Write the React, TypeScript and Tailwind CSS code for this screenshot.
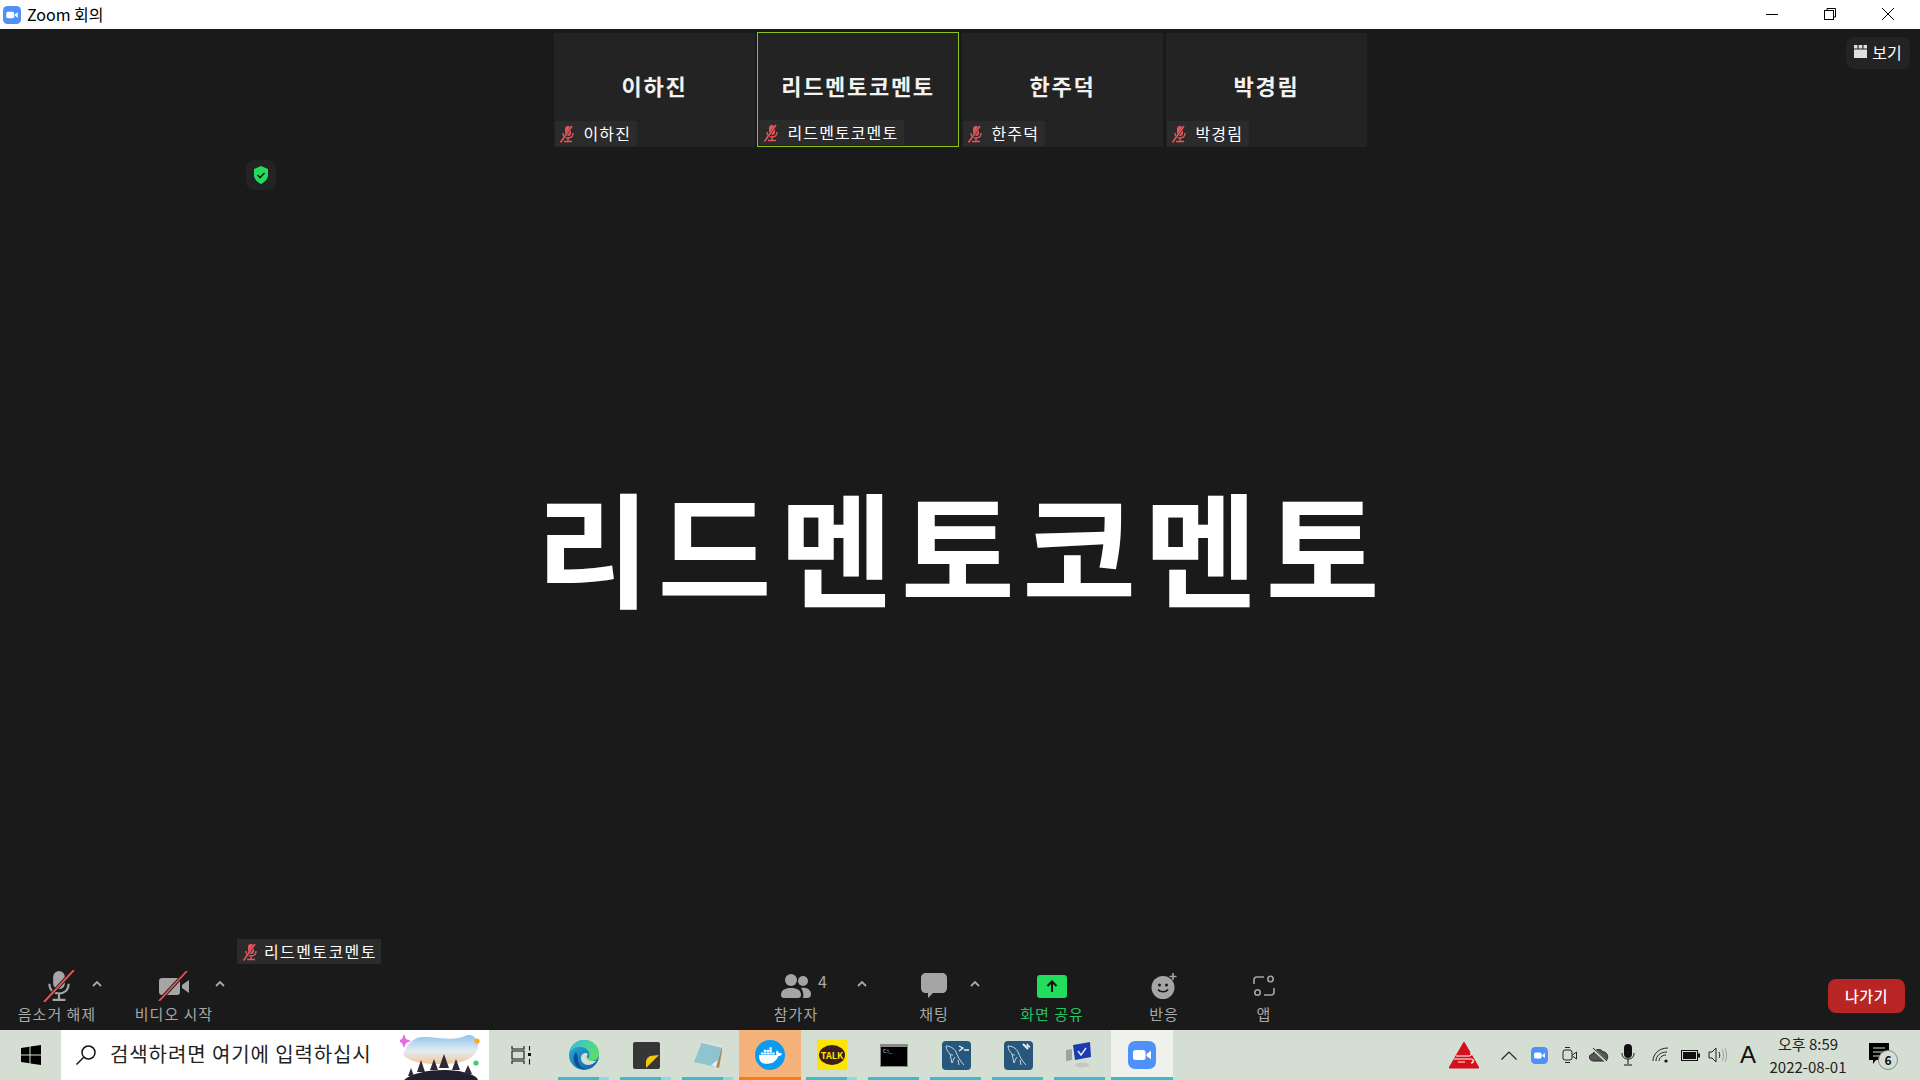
import { SiDocker } from 'react-icons/si';

const FONT = '[font-family:"Noto_Sans_CJK_KR","Noto_Sans",sans-serif]';

function ZoomGlyph({ size }: { size: number }) {
  return (
    <svg width={size} height={size} viewBox="0 0 28 28">
      <rect width="28" height="28" rx="7" fill="#4f90fb" />
      <rect x="5" y="9" width="12.5" height="10" rx="2.5" fill="#fff" />
      <path d="M18.5 13l4.5-3.2v8.4L18.5 15z" fill="#fff" />
    </svg>
  );
}

function MutedMicSmall() {
  return (
    <svg width="16" height="18" viewBox="0 0 16 18" className="shrink-0">
      <rect x="6" y="1" width="6" height="10" rx="3" fill="#e5555a" />
      <path d="M4 8c0 3 2 5 5 5s5-2 5-5M9 13v3M5 16.5h8" stroke="#e5555a" strokeWidth="1.4" fill="none" />
      <path d="M13.5 0.5L2 17.5" stroke="#2b2b2b" strokeWidth="2.4" />
      <path d="M13 1L1.5 17.5" stroke="#e5555a" strokeWidth="1.6" />
    </svg>
  );
}

function NameTag({ name }: { name: string }) {
  return (
    <div className="flex h-[25px] items-center gap-[9px] bg-[#2b2b2b] pl-[4px] pr-[6px]">
      <MutedMicSmall />
      <span className="pb-[1px] text-[16px] leading-none tracking-[1.1px] text-white">{name}</span>
    </div>
  );
}

function Thumb({ name, active }: { name: string; active?: boolean }) {
  return (
    <div className={`flex flex-col justify-between bg-[#232323] ${active ? '-mt-[1px] -ml-[1px] h-[115px] w-[202px] border border-[#8cc21e]' : 'h-[114px] w-[201px]'}`}>
      <div className="pt-[36px] pl-[1px] text-center text-[22px] leading-[32px] font-bold tracking-[1.7px] text-[#f2f2f2]">{name}</div>
      <div className="flex pb-[1px] pl-[1px]"><NameTag name={name} /></div>
    </div>
  );
}

function Caret() {
  return (
    <svg width="16" height="10" viewBox="0 0 16 10">
      <path d="M4 7l4-4 4 4" stroke="#a8a8a8" strokeWidth="1.8" fill="none" />
    </svg>
  );
}

function ToolItem({ width, label, green, children }: { width: string; label: string; green?: boolean; children: React.ReactNode }) {
  return (
    <div className={`flex flex-col items-center ${width}`}>
      <div className="flex h-[34px] items-center justify-center">{children}</div>
      <div className={`mt-[1px] text-[15px] leading-[20px] tracking-[1px] whitespace-nowrap ${green ? 'text-[#22c55e]' : 'text-[#a9a9a9]'}`}>{label}</div>
    </div>
  );
}

function TaskItem({ children, bar = 'none', bg = '' }: { children?: React.ReactNode; bar?: 'none' | 'open' | 'two' | 'orange' | 'full'; bg?: string }) {
  return (
    <div className={`relative flex h-full w-[62px] shrink-0 items-center justify-center ${bg}`}>
      {children}
      {bar === 'open' && <div className="absolute bottom-0 left-[5px] h-[3px] w-[51px] bg-[#35bfcc]" />}
      {bar === 'two' && (
        <div className="absolute bottom-0 left-[5px] flex h-[3px] w-[51px]">
          <div className="w-[41px] bg-[#35bfcc]" />
          <div className="w-[10px] bg-[#8adbe2]" />
        </div>
      )}
      {bar === 'orange' && <div className="absolute bottom-0 left-0 h-[3px] w-full bg-[#fb7c12]" />}
      {bar === 'full' && <div className="absolute bottom-0 left-0 h-[3px] w-full bg-[#35bfcc]" />}
    </div>
  );
}

function SearchArt() {
  return (
    <svg width="82" height="50" viewBox="0 0 82 50">
      <defs>
        <linearGradient id="cloud" x1="0" y1="0" x2="0" y2="1">
          <stop offset="0" stopColor="#8fc4ec" />
          <stop offset="0.55" stopColor="#e3ebf2" />
          <stop offset="1" stopColor="#f0c99a" />
        </linearGradient>
      </defs>
      <path d="M3 24C8 14 12 8 22 7c14-1 30 5 43-1 6-3 12 1 13 8 1 9-8 17-22 19-18 2-47 2-53-9z" fill="url(#cloud)" />
      <path d="M4 4l2 5 5 2-5 2-2 5-2-5-4-2 4-2z" fill="#e66ae6" />
      <circle cx="77" cy="11" r="2.6" fill="#f9a91a" />
      <circle cx="76" cy="33" r="2.6" fill="#3ccf6a" />
      <path d="M4 50c8-7 24-10 40-10s32 4 34 10z" fill="#20202e" />
      <path d="M17 42l4-12 4 12zM30 40l4-11 4 11zM39 38l5-14 5 14zM52 40l4-11 4 11zM64 44l4-9 4 9zM8 46l3-8 3 8z" fill="#2e2a38" />
    </svg>
  );
}

function EdgeIcon() {
  return (
    <svg width="32" height="32" viewBox="0 0 32 32">
      <defs>
        <linearGradient id="edgeA" x1="0" y1="0" x2="1" y2="1">
          <stop offset="0" stopColor="#2bb3d9" />
          <stop offset="1" stopColor="#0c5aa8" />
        </linearGradient>
        <linearGradient id="edgeB" x1="0" y1="0" x2="1" y2="0.6">
          <stop offset="0" stopColor="#35c1e0" />
          <stop offset="1" stopColor="#5cdc6a" />
        </linearGradient>
      </defs>
      <circle cx="16" cy="16" r="15" fill="url(#edgeA)" />
      <path d="M2 13C4 5 10 1 16 1c9 0 15 6 15 14 0 5-4 7-8 7-3 0-5-1-5-2 3-1 4-3 3-6-1-4-5-6-9-6-5 0-8 2-10 5z" fill="url(#edgeB)" />
      <path d="M13 19c0-3 2-5 5-5 2 0 2 2 1 3-1 3 2 5 6 5 1 0 3 0 4-1-2 3-6 5-9 5-4 0-7-3-7-7z" fill="#d5ded3" />
      <path d="M10 20c0 5 3 9 8 10-5 1-11-2-12-8-1-4 0-7 2-9 1 2 2 4 2 7z" fill="#0f4f95" />
    </svg>
  );
}

function MysqlTile({ wrench }: { wrench?: boolean }) {
  return (
    <svg width="29" height="29" viewBox="0 0 29 29">
      <rect width="29" height="29" rx="4" fill="#27577d" />
      <path d="M4 5c4 0 8 2 10 6 2 5 4 9 8 13M4 5c0 3 2 6 4 8 1 3 1 6 2 9M8 13c1 1 2 1 3 1M10 22c1-2 1-3 3-6M16 19l1 5" stroke="#d8e4ec" strokeWidth="0.9" fill="none" />
      {wrench ? (
        <path d="M19 3l5 5M23 3l1 2 2 1" stroke="#eef4f8" strokeWidth="1.8" fill="none" />
      ) : (
        <path d="M17 5l4 2-4 3M22 9h5" stroke="#eef4f8" strokeWidth="1.3" fill="none" />
      )}
    </svg>
  );
}

function Wifi() {
  return (
    <svg width="18" height="18" viewBox="0 0 18 18" fill="none" stroke="#222" strokeWidth="1">
      <path d="M1 15C1 8 7 2 16 2M4 15c0-5 4-9 11-9M7 15c0-3 3-6 7-6" />
      <circle cx="14" cy="15" r="1.6" fill="#111" stroke="none" />
    </svg>
  );
}

export default function App() {
  return (
    <div className={`flex h-[1080px] w-[1920px] flex-col overflow-hidden bg-[#1a1a1a] ${FONT}`}>
      {/* title bar */}
      <div className="flex h-[29px] shrink-0 items-center bg-white pl-[3px] text-black">
        <ZoomGlyph size={18} />
        <span className="ml-[6px] pb-[1px] text-[16px] leading-none">Zoom 회의</span>
        <div className="ml-auto flex h-full items-center pb-[1px]">
          <div className="flex w-[58px] justify-center"><div className="h-px w-[12px] bg-black" /></div>
          <div className="flex w-[58px] justify-center">
            <svg width="12" height="12" viewBox="0 0 12 12" fill="none" stroke="#000"><path d="M3 2.5V.5h8.5V9H9.5" /><rect x=".5" y="2.5" width="9" height="9" /></svg>
          </div>
          <div className="flex w-[58px] justify-center pr-[1px]">
            <svg width="12" height="12" viewBox="0 0 12 12" stroke="#000"><path d="M0 0l12 12M12 0L0 12" /></svg>
          </div>
          <div className="w-[3px]" />
        </div>
      </div>

      {/* video area */}
      <div className="relative flex min-h-0 flex-1 flex-col">
        <div className="flex h-[118px] shrink-0 justify-center gap-[3px] pt-[4px]">
          <Thumb name="이하진" />
          <Thumb name="리드멘토코멘토" active />
          <Thumb name="한주덕" />
          <Thumb name="박경림" />
        </div>
        <div className="flex flex-1 items-center justify-center pb-[20px] pl-[3px]">
          <span className="text-[124px] leading-none font-bold tracking-[7.500px] whitespace-nowrap text-white">리드멘토코멘토</span>
        </div>
        <div className="absolute top-[8px] right-[10px] flex h-[32px] w-[64px] items-center justify-center gap-[5px] rounded-lg bg-[#232323] pb-[3px] text-[16px] text-white">
          <svg width="13" height="13" viewBox="0 0 13 13" fill="#e0e0e0"><path d="M0 0h3.5v3.5H0zM4.7 0h3.6v3.5H4.7zM9.5 0H13v3.5H9.5zM0 4.5h13V13H0z" /></svg>
          보기
        </div>
        <div className="absolute top-[131px] left-[246px] flex h-[30px] w-[30px] items-center justify-center rounded-lg bg-[#232323]">
          <svg width="14" height="18" viewBox="0 0 14 18">
            <path d="M7 0l7 3v6c0 4-3 7-7 9-4-2-7-5-7-9V3z" fill="#22dd5c" />
            <path d="M3.5 9l2.5 2.5 4.500-4.500" stroke="#1a1a1a" strokeWidth="1.6" fill="none" />
          </svg>
        </div>
        <div className="absolute bottom-[-4px] left-[237px]">
          <div className="flex h-[25px] w-[144px] items-center gap-[6px] bg-[#2b2b2b] pl-[5px] text-[16px] tracking-[1.400px] text-white">
            <MutedMicSmall />
            <span className="pb-[1px] leading-none">리드멘토코멘토</span>
          </div>
        </div>
      </div>

      {/* meeting controls */}
      <div className="flex h-[70px] shrink-0 items-start pt-[9px] pl-[17px]">
        <ToolItem width="w-[80px]" label="음소거 해제">
          <svg width="32" height="32" viewBox="0 0 30 30" className="ml-[3px]">
            <rect x="9.500" y="1" width="11" height="17" rx="5.500" fill="#a5a5a5" />
            <path d="M6 13c0 6 4 9 9 9s9-3 9-9M15 22v5M9 28h12" stroke="#a5a5a5" strokeWidth="2" fill="none" />
            <path d="M29 0L1 30" stroke="#1a1a1a" strokeWidth="3.500" />
            <path d="M29 0L1 30" stroke="#e5555a" strokeWidth="1.800" />
          </svg>
        </ToolItem>
        <div className="-ml-[8px] mt-[10px]"><Caret /></div>
        <div className="ml-[29px]">
          <ToolItem width="w-[80px]" label="비디오 시작">
            <svg width="32" height="30" viewBox="0 0 32 30">
              <rect x="1" y="7" width="21" height="17" rx="3" fill="#a5a5a5" />
              <path d="M24 14l7-5v13l-7-5z" fill="#a5a5a5" />
              <path d="M29 0L1 30" stroke="#1a1a1a" strokeWidth="3.500" />
              <path d="M29 0L1 30" stroke="#e5555a" strokeWidth="1.800" />
            </svg>
          </ToolItem>
        </div>
        <div className="-ml-[2px] mt-[10px]"><Caret /></div>
        <div className="ml-[528px]">
          <ToolItem width="w-[80px]" label="참가자">
            <div className="relative">
              <svg width="30" height="24" viewBox="0 0 30 24" fill="#a5a5a5">
                <circle cx="10" cy="6" r="6" />
                <circle cx="22" cy="7" r="5" />
                <path d="M0 21c0-5 4-7 10-7s10 2 10 7c0 2-1 3-3 3H3c-2 0-3-1-3-3zM20 14c6-1 10 2 10 6 0 3-2 4-4 4h-4c1-4 0-7-2-10z" />
              </svg>
              <span className="absolute top-[-2px] left-[37px] text-[16px] leading-[18px] text-[#a9a9a9]">4</span>
            </div>
          </ToolItem>
        </div>
        <div className="ml-[18px] mt-[10px]"><Caret /></div>
        <div className="ml-[34px]">
          <ToolItem width="w-[60px]" label="채팅">
            <svg width="26" height="26" viewBox="0 0 26 26" fill="#a5a5a5"><path d="M5 0h16c3 0 5 2 5 5v10c0 3-2 5-5 5H12l-5 5v-5H5c-3 0-5-2-5-5V5c0-3 2-5 5-5z" /></svg>
          </ToolItem>
        </div>
        <div className="ml-[3px] mt-[10px]"><Caret /></div>
        <div className="ml-[29px]">
          <ToolItem width="w-[80px]" label="화면 공유" green>
            <svg width="30" height="23" viewBox="0 0 30 23">
              <rect width="30" height="23" rx="3" fill="#22dd5c" />
              <path d="M15 17V7M10.500 11L15 6.500 19.500 11" stroke="#111" strokeWidth="2" fill="none" />
            </svg>
          </ToolItem>
        </div>
        <div className="ml-[42px]">
          <ToolItem width="w-[60px]" label="반응">
            <svg width="28" height="28" viewBox="0 0 28 28" className="ml-[1px]">
              <circle cx="12" cy="15.500" r="11.500" fill="#a5a5a5" />
              <circle cx="8.500" cy="13" r="1.500" fill="#1a1a1a" />
              <circle cx="15.500" cy="13" r="1.500" fill="#1a1a1a" />
              <path d="M7 17.500c2 3 8 3 10 0" stroke="#1a1a1a" strokeWidth="1.600" fill="none" />
              <path d="M22 1v7M18.500 4.500h7" stroke="#a5a5a5" strokeWidth="1.600" />
            </svg>
          </ToolItem>
        </div>
        <div className="ml-[40px]">
          <ToolItem width="w-[60px]" label="앱">
            <svg width="22" height="22" viewBox="0 0 22 22" fill="none" stroke="#a5a5a5" strokeWidth="1.600">
              <path d="M1 9V5c0-2 1-3 3-3h7M21 13v4c0 2-1 3-3 3h-7" />
              <circle cx="17.500" cy="4" r="2.700" />
              <circle cx="4.500" cy="17.500" r="2.700" />
            </svg>
          </ToolItem>
        </div>
        <div className="ml-auto mr-[15px] mt-[10px] flex h-[34px] w-[77px] items-center justify-center rounded-[8px] bg-[#b82525] text-[15px] font-medium tracking-[0.5px] text-white">나가기</div>
      </div>

      {/* windows taskbar */}
      <div className="flex h-[50px] shrink-0 items-stretch bg-[#d5ded3]">
        <div className="flex w-[61px] items-center justify-center">
          <svg width="20" height="20" viewBox="0 0 20 20" fill="#000"><path d="M0 3l8.500-1.200V9.500H0zM9.500 1.600L20 0v9.500H9.500zM0 10.500h8.500v7.700L0 17zM9.500 10.500H20V20L9.500 18.400z" /></svg>
        </div>
        <div className="mr-[2px] flex w-[428px] items-center overflow-hidden bg-white pl-[14px]">
          <svg width="22" height="22" viewBox="0 0 22 22" fill="none" stroke="#111" strokeWidth="1.500" className="shrink-0">
            <circle cx="13.500" cy="8.500" r="6.500" /><path d="M8.500 13.500L1.500 20.500" />
          </svg>
          <span className="ml-[13px] pb-[2px] text-[20px] leading-none tracking-[0.9px] whitespace-nowrap text-[#222]">검색하려면 여기에 입력하십시</span>
          <div className="ml-auto mr-[7px] shrink-0"><SearchArt /></div>
        </div>
        <TaskItem>
          <svg width="20" height="20" viewBox="0 0 20 20" fill="none" stroke="#111" strokeWidth="1.100" className="-ml-[3px]">
            <path d="M1 1v3h12V1M1 19v-3h12v3M1 6h12v8H1zM18.500 1v4.500M18.500 14v5.500" />
            <rect x="17" y="8" width="3" height="3" fill="#111" stroke="none" />
          </svg>
        </TaskItem>
        <TaskItem bar="two"><EdgeIcon /></TaskItem>
        <TaskItem bar="two">
          <svg width="27" height="27" viewBox="0 0 27 27">
            <rect width="27" height="27" rx="2" fill="#363636" />
            <path d="M13 26V20c0-2 1-4 4-6l9-1v0L13 26z" fill="#f2c811" />
          </svg>
        </TaskItem>
        <TaskItem bar="two">
          <svg width="30" height="30" viewBox="0 0 30 30">
            <path d="M9 2l20 5-6 20L1 22z" fill="#8fc3cf" />
            <path d="M9 2l20 5" stroke="#dfe5e5" strokeWidth="1.500" />
            <path d="M29 7l-6 20 3 1 3-17z" fill="#a8875a" />
            <path d="M18 25l5 2 2-7z" fill="#e8eef0" />
          </svg>
        </TaskItem>
        <TaskItem bar="orange" bg="bg-[#f5b27a]">
          <div className="flex h-[30px] w-[30px] items-center justify-center rounded-full bg-[#0a9bf0]">
            <SiDocker size={23} color="#fff" />
          </div>
        </TaskItem>
        <TaskItem bar="two">
          <div className="flex h-[30px] w-[30px] items-center justify-center bg-[#fde500]">
            <div className="flex h-[20px] w-[26px] items-center justify-center rounded-[50%] bg-[#3a1d1d] text-[9px] leading-none font-bold text-[#fde500]">TALK</div>
          </div>
        </TaskItem>
        <TaskItem bar="open">
          <div className="h-[23px] w-[28px] border border-[#8a8a8a] border-t-[3px] bg-black pl-[2px] text-[5px] leading-[8px] text-[#ddd]">C:\_</div>
        </TaskItem>
        <TaskItem bar="open"><MysqlTile /></TaskItem>
        <TaskItem bar="open"><MysqlTile wrench /></TaskItem>
        <TaskItem bar="open">
          <svg width="30" height="30" viewBox="0 0 30 30">
            <path d="M8 5l17-3 1 15-16 3z" fill="#1b3bb0" />
            <path d="M13 11l3 4 5-7" stroke="#dfe8ff" strokeWidth="1.500" fill="none" />
            <path d="M1 10l6-1v11l-6 1z" fill="#9ca39c" />
            <ellipse cx="17" cy="25" rx="7" ry="2.500" fill="#c4c8c4" />
          </svg>
        </TaskItem>
        <TaskItem bar="full" bg="bg-[#eef1ec]"><ZoomGlyph size={28} /></TaskItem>

        {/* tray */}
        <div className="ml-auto flex h-full items-center pr-[27px]">
          <svg width="30" height="28" viewBox="0 0 30 28"><path d="M15 1L30 27H0z" fill="#d5101c" stroke="#d5101c" strokeLinejoin="round" /><path d="M7 15h13c3 0 3-3 1-3M5 18h17c3 0 3 4 0 4M9 21h7" stroke="#fff" strokeWidth="1.200" fill="none" /></svg>
          <svg width="16" height="9" viewBox="0 0 16 9" fill="none" stroke="#222" strokeWidth="1.200" className="ml-[22px]"><path d="M0.500 8.500L8 1l7.500 7.500" /></svg>
          <div className="ml-[14px]"><ZoomGlyph size={17} /></div>
          <svg width="16" height="18" viewBox="0 0 16 18" fill="none" stroke="#222" strokeWidth="1" className="ml-[14px]"><rect x="1" y="4" width="9" height="10" rx="2" /><path d="M10.500 9l4-3v7l-4-3M3 1.500h5M3 16.500h5" /></svg>
          <svg width="20" height="16" viewBox="0 0 20 16" className="ml-[11px]"><path d="M5 14c-6 0-6-7-1-7 1-5 8-6 10-2 5-1 7 9 1 9z" fill="#555" stroke="#222" /><path d="M3 1l15 14" stroke="#d5ded3" strokeWidth="2.500" /><path d="M4 1l14 13" stroke="#222" /></svg>
          <svg width="14" height="22" viewBox="0 0 14 22" className="ml-[12px]"><rect x="3" y="0" width="8" height="14" rx="4" fill="#111" /><path d="M1 9c0 4 2 6 6 6s6-2 6-6M7 15v5M3 21h8" stroke="#111" fill="none" /></svg>
          <div className="ml-[17px]"><Wifi /></div>
          <svg width="19" height="11" viewBox="0 0 19 11" className="ml-[11px]"><rect x=".5" y=".5" width="16" height="10" fill="none" stroke="#111" /><rect x="2" y="2" width="13" height="7" fill="#111" /><rect x="17" y="3.500" width="2" height="4" fill="#111" /></svg>
          <svg width="20" height="16" viewBox="0 0 20 16" fill="none" stroke="#222" strokeWidth="1" className="ml-[8px]"><path d="M1 5h3l4-4v14l-4-4H1zM11 5c1 2 1 4 0 6" /><path d="M14 2c2 4 2 8 0 12M17 1c2 4 2 10 0 14" stroke="#999" /></svg>
          <span className="ml-[12px] w-[20px] text-[24px] leading-none text-[#111] [font-family:'Liberation_Sans',sans-serif]">A</span>
          <div className="ml-[7px] flex w-[82px] flex-col items-center text-[15px] leading-[23px] whitespace-nowrap text-[#222]">
            <span>오후 8:59</span>
            <span>2022-08-01</span>
          </div>
          <div className="relative ml-[20px] h-[24px] w-[24px]">
            <svg width="21" height="22" viewBox="0 0 21 22"><path d="M0 0h20v17H7l-3 4v-4H0z" fill="#000" /><path d="M4 5h12M4 9h12M4 13h8" stroke="#d5ded3" /></svg>
            <div className="absolute top-[7px] left-[9px] flex h-[20px] w-[20px] items-center justify-center rounded-full border border-[#888] bg-[#d5ded3] text-[12px] leading-none font-bold text-[#111]">6</div>
          </div>
        </div>
      </div>
    </div>
  );
}
